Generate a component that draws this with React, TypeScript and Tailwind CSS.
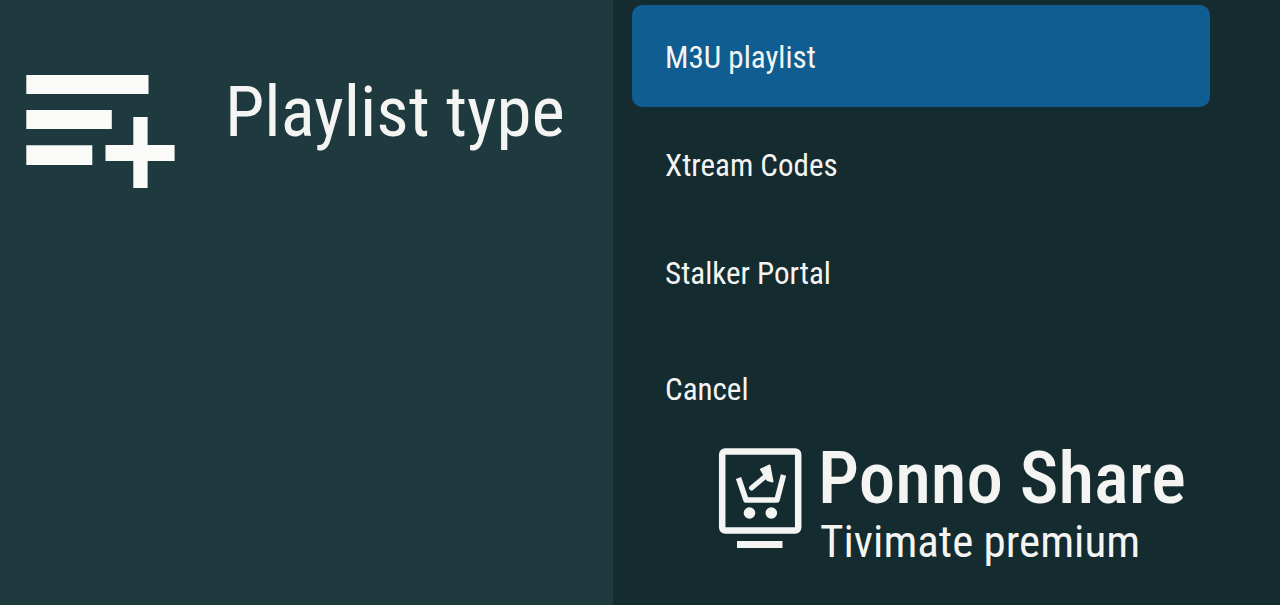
const playlistTypes = ["M3U playlist", "Xtream Codes", "Stalker Portal"];

function PlaylistAddIcon() {
  return (
    <svg viewBox="0 0 150 114" className="h-[114px] w-[150px] shrink-0" fill="#fafbf9" aria-hidden="true">
      <path d="M1.3 1h122.2v19H1.3zM1.3 36h85.5v19H1.3zM1.3 71.3h66V91h-66z" />
      <path d="M108.3 43h14.3v28h27v16h-27v27.5h-14.300V87H80.5V71h27.8z" />
    </svg>
  );
}

function BrandLogo() {
  return (
    <svg viewBox="0 0 84 102" className="h-[102px] w-[84px] shrink-0" fill="none" stroke="#f4f5f3" aria-hidden="true">
      <rect x="4.2" y="3.5" width="76" height="79" rx="3" strokeWidth="6.5" />
      <path d="M20.500 30l7.500 22h31l6.500-25" strokeWidth="5.5" strokeLinejoin="round" />
      <path d="M33.500 40L49 27" strokeWidth="5" strokeLinecap="round" />
      <path d="M43 21.500l8.500-4 3 16-5-1.500z" fill="#f4f5f3" strokeWidth="2" strokeLinejoin="round" />
      <circle cx="31.5" cy="65" r="5.8" fill="#f4f5f3" stroke="none" />
      <circle cx="53.3" cy="65" r="5.8" fill="#f4f5f3" stroke="none" />
      <path d="M19 96.500h45.500" strokeWidth="7" />
    </svg>
  );
}

function MenuButton({ label, active = false }: { label: string; active?: boolean }) {
  return (
    <button
      type="button"
      aria-pressed={active}
      className={`h-[102px] w-full rounded-[10px] px-[33px] pt-1 text-left text-[31px] ${active ? "bg-[#0f5d91]" : ""}`}
    >
      {label}
    </button>
  );
}

export default function App() {
  return (
    <div className="flex min-h-screen bg-[#142b2f] font-['Roboto_Condensed',Roboto,sans-serif] text-[#f4f5f3]">
      <section className="w-[47.9%] shrink-0 bg-[#1e3a3f] pt-[74px] pl-[25px]">
        <div className="flex items-start gap-[50px]">
          <PlaylistAddIcon />
          <h1 className="text-[71px] leading-[76px] whitespace-nowrap">Playlist type</h1>
        </div>
      </section>
      <main className="min-w-0 flex-1 pt-[5px] pr-[70px] pl-[19px]">
        <ul className="flex flex-col gap-1.5">
          {playlistTypes.map((type, i) => (
            <li key={type}>
              <MenuButton label={type} active={i === 0} />
            </li>
          ))}
        </ul>
        <div className="mt-3.5">
          <MenuButton label="Cancel" />
        </div>
        <div className="mt-[9px] flex gap-4 pl-[86px]">
          <BrandLogo />
          <div className="whitespace-nowrap">
            <p className="text-[73px] leading-[60px] font-medium">Ponno Share</p>
            <p className="pl-0.5 text-[45px] leading-[68px]">Tivimate premium</p>
          </div>
        </div>
      </main>
    </div>
  );
}
